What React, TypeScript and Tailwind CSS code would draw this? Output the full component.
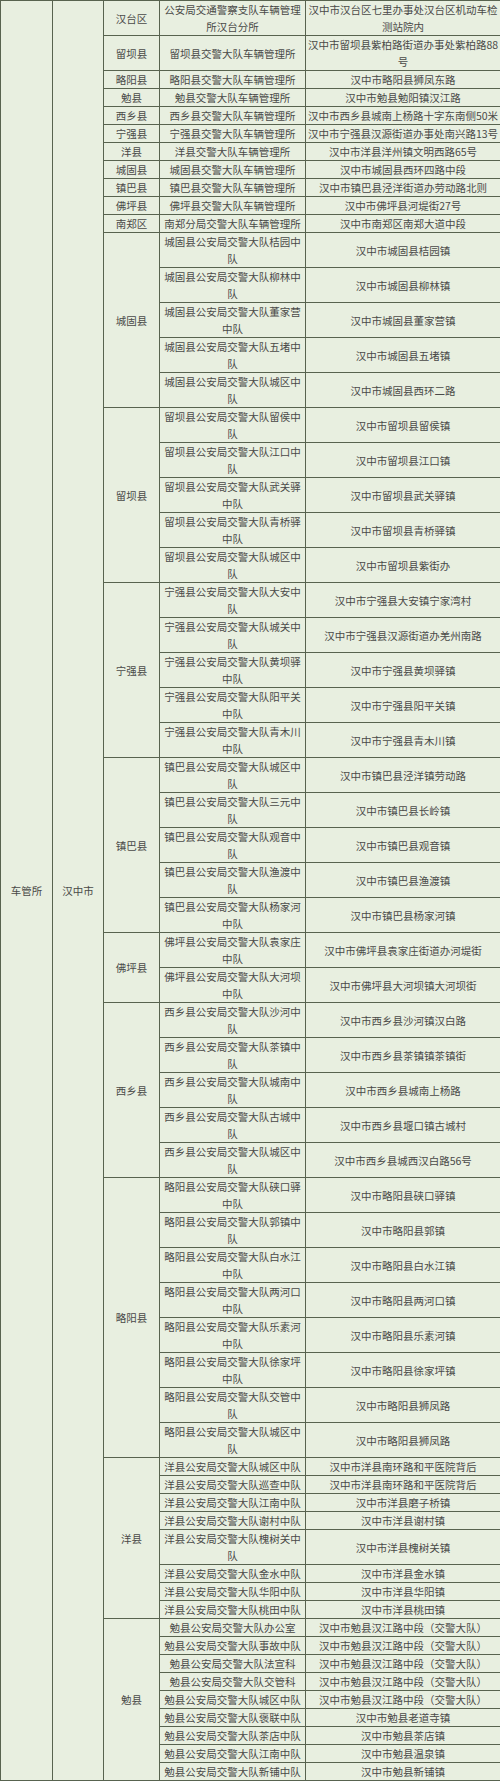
type Row = [string, string];

interface Group {
  county: string;
  rows: Row[];
}

// top block: one row per county, each with its own label
const offices: [string, string, string][] = [
  ["汉台区", "公安局交通警察支队车辆管理\n所汉台分所", "汉中市汉台区七里办事处汉台区机动车检\n测站院内"],
  ["留坝县", "留坝县交警大队车辆管理所", "汉中市留坝县紫柏路街道办事处紫柏路88\n号"],
  ["略阳县", "略阳县交警大队车辆管理所", "汉中市略阳县狮凤东路"],
  ["勉县", "勉县交警大队车辆管理所", "汉中市勉县勉阳镇汉江路"],
  ["西乡县", "西乡县交警大队车辆管理所", "汉中市西乡县城南上杨路十字东南侧50米"],
  ["宁强县", "宁强县交警大队车辆管理所", "汉中市宁强县汉源街道办事处南兴路13号"],
  ["洋县", "洋县交警大队车辆管理所", "汉中市洋县洋州镇文明西路65号"],
  ["城固县", "城固县交警大队车辆管理所", "汉中市城固县西环四路中段"],
  ["镇巴县", "镇巴县交警大队车辆管理所", "汉中市镇巴县泾洋街道办劳动路北则"],
  ["佛坪县", "佛坪县交警大队车辆管理所", "汉中市佛坪县河堤街27号"],
  ["南郑区", "南郑分局交警大队车辆管理所", "汉中市南郑区南郑大道中段"],
];

const groups: Group[] = [
  {
    county: "城固县",
    rows: [
      ["城固县公安局交警大队桔园中\n队", "汉中市城固县桔园镇"],
      ["城固县公安局交警大队柳林中\n队", "汉中市城固县柳林镇"],
      ["城固县公安局交警大队董家营\n中队", "汉中市城固县董家营镇"],
      ["城固县公安局交警大队五堵中\n队", "汉中市城固县五堵镇"],
      ["城固县公安局交警大队城区中\n队", "汉中市城固县西环二路"],
    ],
  },
  {
    county: "留坝县",
    rows: [
      ["留坝县公安局交警大队留侯中\n队", "汉中市留坝县留侯镇"],
      ["留坝县公安局交警大队江口中\n队", "汉中市留坝县江口镇"],
      ["留坝县公安局交警大队武关驿\n中队", "汉中市留坝县武关驿镇"],
      ["留坝县公安局交警大队青桥驿\n中队", "汉中市留坝县青桥驿镇"],
      ["留坝县公安局交警大队城区中\n队", "汉中市留坝县紫街办"],
    ],
  },
  {
    county: "宁强县",
    rows: [
      ["宁强县公安局交警大队大安中\n队", "汉中市宁强县大安镇宁家湾村"],
      ["宁强县公安局交警大队城关中\n队", "汉中市宁强县汉源街道办羌州南路"],
      ["宁强县公安局交警大队黄坝驿\n中队", "汉中市宁强县黄坝驿镇"],
      ["宁强县公安局交警大队阳平关\n中队", "汉中市宁强县阳平关镇"],
      ["宁强县公安局交警大队青木川\n中队", "汉中市宁强县青木川镇"],
    ],
  },
  {
    county: "镇巴县",
    rows: [
      ["镇巴县公安局交警大队城区中\n队", "汉中市镇巴县泾洋镇劳动路"],
      ["镇巴县公安局交警大队三元中\n队", "汉中市镇巴县长岭镇"],
      ["镇巴县公安局交警大队观音中\n队", "汉中市镇巴县观音镇"],
      ["镇巴县公安局交警大队渔渡中\n队", "汉中市镇巴县渔渡镇"],
      ["镇巴县公安局交警大队杨家河\n中队", "汉中市镇巴县杨家河镇"],
    ],
  },
  {
    county: "佛坪县",
    rows: [
      ["佛坪县公安局交警大队袁家庄\n中队", "汉中市佛坪县袁家庄街道办河堤街"],
      ["佛坪县公安局交警大队大河坝\n中队", "汉中市佛坪县大河坝镇大河坝街"],
    ],
  },
  {
    county: "西乡县",
    rows: [
      ["西乡县公安局交警大队沙河中\n队", "汉中市西乡县沙河镇汉白路"],
      ["西乡县公安局交警大队茶镇中\n队", "汉中市西乡县茶镇镇茶镇街"],
      ["西乡县公安局交警大队城南中\n队", "汉中市西乡县城南上杨路"],
      ["西乡县公安局交警大队古城中\n队", "汉中市西乡县堰口镇古城村"],
      ["西乡县公安局交警大队城区中\n队", "汉中市西乡县城西汉白路56号"],
    ],
  },
  {
    county: "略阳县",
    rows: [
      ["略阳县公安局交警大队硖口驿\n中队", "汉中市略阳县硖口驿镇"],
      ["略阳县公安局交警大队郭镇中\n队", "汉中市略阳县郭镇"],
      ["略阳县公安局交警大队白水江\n中队", "汉中市略阳县白水江镇"],
      ["略阳县公安局交警大队两河口\n中队", "汉中市略阳县两河口镇"],
      ["略阳县公安局交警大队乐素河\n中队", "汉中市略阳县乐素河镇"],
      ["略阳县公安局交警大队徐家坪\n中队", "汉中市略阳县徐家坪镇"],
      ["略阳县公安局交警大队交管中\n队", "汉中市略阳县狮凤路"],
      ["略阳县公安局交警大队城区中\n队", "汉中市略阳县狮凤路"],
    ],
  },
  {
    county: "洋县",
    rows: [
      ["洋县公安局交警大队城区中队", "汉中市洋县南环路和平医院背后"],
      ["洋县公安局交警大队巡查中队", "汉中市洋县南环路和平医院背后"],
      ["洋县公安局交警大队江南中队", "汉中市洋县磨子桥镇"],
      ["洋县公安局交警大队谢村中队", "汉中市洋县谢村镇"],
      ["洋县公安局交警大队槐树关中\n队", "汉中市洋县槐树关镇"],
      ["洋县公安局交警大队金水中队", "汉中市洋县金水镇"],
      ["洋县公安局交警大队华阳中队", "汉中市洋县华阳镇"],
      ["洋县公安局交警大队桃田中队", "汉中市洋县桃田镇"],
    ],
  },
  {
    county: "勉县",
    rows: [
      ["勉县公安局交警大队办公室", "汉中市勉县汉江路中段（交警大队）"],
      ["勉县公安局交警大队事故中队", "汉中市勉县汉江路中段（交警大队）"],
      ["勉县公安局交警大队法宣科", "汉中市勉县汉江路中段（交警大队）"],
      ["勉县公安局交警大队交管科", "汉中市勉县汉江路中段（交警大队）"],
      ["勉县公安局交警大队城区中队", "汉中市勉县汉江路中段（交警大队）"],
      ["勉县公安局交警大队褒联中队", "汉中市勉县老道寺镇"],
      ["勉县公安局交警大队茶店中队", "汉中市勉县茶店镇"],
      ["勉县公安局交警大队江南中队", "汉中市勉县温泉镇"],
      ["勉县公安局交警大队新铺中队", "汉中市勉县新铺镇"],
    ],
  },
];

const totalRows = offices.length + groups.reduce((n, g) => n + g.rows.length, 0);

const cell = "border border-[#58634f] px-0 py-0 text-center align-middle whitespace-pre";

export default function App() {
  return (
    <div className="w-[500px] bg-[#e8efe0] text-[#4a4a48] text-[10.5px] leading-[17px] [font-family:'Noto_Sans_CJK_SC',sans-serif]">
      <table className="w-[500px] table-fixed border-collapse">
        <colgroup>
          <col className="w-[52px]" />
          <col className="w-[51px]" />
          <col className="w-[56px]" />
          <col className="w-[146px]" />
          <col className="w-[195px]" />
        </colgroup>
        <tbody>
          {offices.map(([county, name, addr], i) => (
            <tr key={county}>
              {i === 0 && (
                <>
                  <td rowSpan={totalRows} className={cell}>
                    车管所
                  </td>
                  <td rowSpan={totalRows} className={cell}>
                    汉中市
                  </td>
                </>
              )}
              <td className={cell}>{county}</td>
              <td className={cell}>{name}</td>
              <td className={cell}>{addr}</td>
            </tr>
          ))}
          {groups.map((g) =>
            g.rows.map(([name, addr], i) => (
              <tr key={g.county + i}>
                {i === 0 && (
                  <td rowSpan={g.rows.length} className={cell}>
                    {g.county}
                  </td>
                )}
                <td className={cell}>{name}</td>
                <td className={cell}>{addr}</td>
              </tr>
            ))
          )}
        </tbody>
      </table>
    </div>
  );
}
